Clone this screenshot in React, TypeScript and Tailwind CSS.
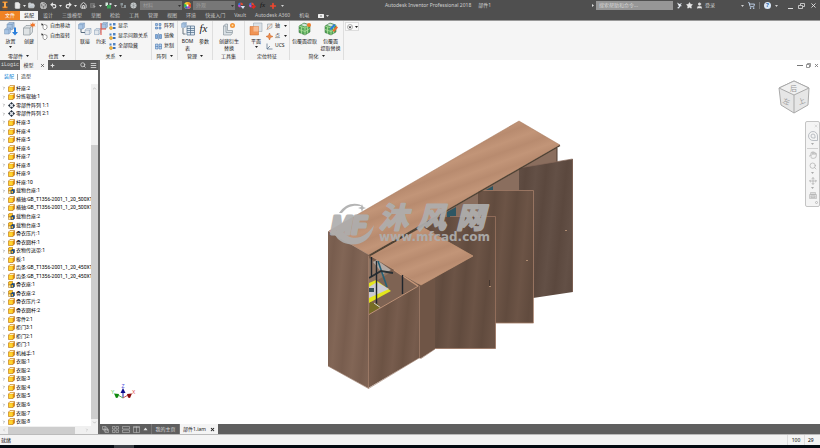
import { ReactNode } from "react";
import {
  ChevronDown,
  ChevronRight,
  ChevronUp,
  File,
  FolderOpen,
  Hand,
  House,
  Menu,
  Move,
  Plus,
  Redo2,
  Save,
  Search,
  ShoppingCart,
  Star,
  Undo2,
  User,
  X,
} from "lucide-react";

const menuTabs = [
  "设计",
  "三维模型",
  "草图",
  "检验",
  "工具",
  "管理",
  "视图",
  "环境",
  "快速入门",
  "Vault",
  "Autodesk A360",
  "机电",
];

type NodeKind = "part" | "assembly" | "pattern";

const treeNodes: { kind: NodeKind; name: string }[] = [
  { kind: "part", name: "杆座:2" },
  { kind: "part", name: "分拣辊轴:1" },
  { kind: "pattern", name: "零部件阵列 1:1" },
  { kind: "pattern", name: "零部件阵列 2:1" },
  { kind: "part", name: "杆座:3" },
  { kind: "part", name: "杆座:4" },
  { kind: "part", name: "杆座:5" },
  { kind: "part", name: "杆座:6" },
  { kind: "part", name: "杆座:7" },
  { kind: "part", name: "杆座:8" },
  { kind: "part", name: "杆座:9" },
  { kind: "part", name: "杆座:10" },
  { kind: "assembly", name: "载物台座:1" },
  { kind: "part", name: "横轴:GB_T1356-2001_1_20_500X15" },
  { kind: "part", name: "横轴:GB_T1356-2001_1_20_500X15" },
  { kind: "assembly", name: "载物台座:2" },
  { kind: "assembly", name: "载物台座:3" },
  { kind: "part", name: "叠衣压片:1" },
  { kind: "part", name: "叠衣圆杆:1" },
  { kind: "assembly", name: "衣物传送带:1" },
  { kind: "part", name: "板:1" },
  { kind: "part", name: "齿条:GB_T1356-2001_1_20_450X15" },
  { kind: "part", name: "齿条:GB_T1356-2001_1_20_450X15" },
  { kind: "assembly", name: "叠衣座:1" },
  { kind: "assembly", name: "叠衣座:2" },
  { kind: "part", name: "叠衣压片:2" },
  { kind: "part", name: "叠衣圆杆:2" },
  { kind: "part", name: "零件2:1" },
  { kind: "part", name: "柜门3:1" },
  { kind: "part", name: "柜门2:1" },
  { kind: "part", name: "柜门:1" },
  { kind: "part", name: "机械手:1" },
  { kind: "part", name: "衣服:1" },
  { kind: "part", name: "衣服:2" },
  { kind: "part", name: "衣服:3" },
  { kind: "part", name: "衣服:4" },
  { kind: "part", name: "衣服:5" },
  { kind: "part", name: "衣服:6" },
  { kind: "part", name: "衣服:7" },
  { kind: "part", name: "衣服:8" },
];

function Caret({ className = "" }: { className?: string }) {
  return (
    <svg viewBox="0 0 6 4" className={`h-[2px] w-[3px] shrink-0 ${className}`}>
      <path d="M0 0h6L3 4z" fill="currentColor" />
    </svg>
  );
}

function NodeIcon({ kind }: { kind: NodeKind }) {
  if (kind === "pattern") {
    return (
      <svg viewBox="0 0 14 14" className="size-[7px] shrink-0">
        <circle cx="7" cy="7" r="4.5" fill="#e8edf3" stroke="#53606e" strokeWidth="1.6" />
        <path
          d="M7 0l2.5 2.5L7 5 4.500 2.500zM7 9l2.500 2.500L7 14l-2.500-2.500zM2.500 4.500L5 7 2.500 9.500 0 7zM11.500 4.500L14 7l-2.500 2.500L9 7z"
          fill="#27313d"
        />
      </svg>
    );
  }
  if (kind === "assembly") {
    return (
      <svg viewBox="0 0 14 14" className="size-[7px] shrink-0">
        <path d="M1 2l3-1.500h5V8H1z" fill="#ffc928" stroke="#9c5b05" />
        <path d="M1 8h5v5H1z" fill="#fff1a8" stroke="#a86405" />
        <path d="M6 7l2-2h5v6l-2 2H6z" fill="#1c4f86" stroke="#172c46" />
        <path d="M7 8h3v4H7z" fill="#f7b32b" />
      </svg>
    );
  }
  return (
    <svg viewBox="0 0 14 14" className="size-[7px] shrink-0">
      <path d="M1 4l3-3h9v9l-3 3H1z" fill="#e08a0b" stroke="#a35a08" />
      <path d="M1.500 4.500h8v8h-8z" fill="#ffd42e" />
      <path d="M2 4l2.500-2.500h8L10 4z" fill="#fff0c0" />
    </svg>
  );
}

function ColorWheel() {
  return (
    <svg viewBox="0 0 14 14" className="size-[7px] shrink-0">
      <circle cx="7" cy="7" r="7" fill="#f5d327" />
      <path d="M7 7V0a7 7 0 0 1 6 3.500z" fill="#f08a24" />
      <path d="M7 7l6-3.500a7 7 0 0 1 0 7z" fill="#e23b2e" />
      <path d="M7 7l6 3.500A7 7 0 0 1 7 14z" fill="#b13bc4" />
      <path d="M7 7v7a7 7 0 0 1-6-3.500z" fill="#2f63e0" />
      <path d="M7 7l-6 3.500a7 7 0 0 1 0-7z" fill="#29b455" />
      <circle cx="7" cy="7" r="2" fill="#fff" />
    </svg>
  );
}

function Adjuster({ erase = false }: { erase?: boolean }) {
  return (
    <svg viewBox="0 0 14 14" className="size-[7px] shrink-0">
      <path d="M0 6a5 5 0 0 1 5-5v5z" fill="#3174d8" />
      <path d="M5 1a5 5 0 0 1 5 5H5z" fill="#e8482e" />
      <path d="M0 6h5v5a5 5 0 0 1-5-5z" fill="#c04ad0" />
      {erase ? (
        <path d="M5 10l5-5 4 4-5 5z" fill="#e02a1e" />
      ) : (
        <path d="M5 8h9l-4 6z" fill="#d5e4f5" />
      )}
    </svg>
  );
}

function TitleButton({ label, children }: { label: string; children: ReactNode }) {
  return (
    <button aria-label={label} className="flex h-full shrink-0 items-center text-[#e8e8e8]">
      {children}
    </button>
  );
}

function StyleSelect({ label, value }: { label: string; value: string }) {
  return (
    <div className="relative flex h-[9px] w-[42px] shrink-0 items-center bg-[#777]">
      <select
        aria-label={label}
        className="h-full w-full appearance-none bg-transparent pl-[3px] text-[5px] leading-[9px] text-[#9c9c9c]">
        <option>{value}</option>
      </select>
      <Caret className="pointer-events-none absolute right-[1px] text-[#333]" />
    </div>
  );
}

function TitleBar() {
  return (
    <header className="flex h-[11px] shrink-0 items-center bg-[#4f4f4f] pr-[3px] pl-[2px] text-[5px] leading-[11px] text-[#d0d0d0]">
      <svg viewBox="0 0 12 18" className="mr-[6px] h-[9px] w-[6px] shrink-0">
        <path d="M1 1h10v3H8v7h3v3H1v-3h3V4H1z" fill="#f08b23" />
        <path d="M1 15h10v2H1z" fill="#a85b16" />
        <path d="M5 2h2v11H5z" fill="#ffc279" />
      </svg>
      <div className="flex h-full items-center gap-[2px]">
        <TitleButton label="新建">
          <File className="size-[7px]" fill="#e8e8e8" />
          <Caret className="ml-[2px]" />
        </TitleButton>
        <TitleButton label="打开">
          <FolderOpen className="size-[7px]" fill="#bcc5cc" />
        </TitleButton>
      </div>
      <div className="ml-[5px] flex h-full items-center gap-[3px]">
        <TitleButton label="保存">
          <Save className="size-[7px]" strokeWidth={3} />
        </TitleButton>
        <TitleButton label="撤销">
          <Undo2 className="size-[7px]" strokeWidth={4} />
          <Caret className="ml-[2px]" />
        </TitleButton>
        <TitleButton label="重做">
          <Redo2 className="size-[7px]" strokeWidth={4} />
          <Caret className="ml-[2px]" />
        </TitleButton>
        <TitleButton label="主页">
          <House className="size-[7px]" strokeWidth={3} />
        </TitleButton>
        <TitleButton label="选择">
          <svg viewBox="0 0 14 14" className="size-[7px]">
            <path d="M1 3h8v8H1z" fill="#696969" stroke="#8d8d8d" />
            <path d="M6 5l6 5H9l-1 3z" fill="#a8a8a8" />
          </svg>
          <Caret className="ml-[2px]" />
        </TitleButton>
        <TitleButton label="本地更新">
          <svg viewBox="0 0 14 14" className="size-[7px]">
            <path d="M1 1h5v7H1z" fill="#d7e6dd" />
            <path d="M4 6h8v7H4z" fill="#3da258" />
            <path d="M9 2h4v4H9z" fill="#cfd6da" />
          </svg>
          <Caret className="ml-[2px]" />
        </TitleButton>
        <TitleButton label="返回">
          <svg viewBox="0 0 14 14" className="size-[7px]">
            <path d="M1 2h5v5H1zM8 6h4v6H8z" fill="#8a9498" />
            <path d="M3 7v4h5" stroke="#b0b0b0" fill="none" />
          </svg>
        </TitleButton>
        <TitleButton label="材料浏览器">
          <svg viewBox="0 0 14 14" className="size-[7px]">
            <circle cx="7" cy="7" r="6" fill="#c8cccd" />
            <path d="M2 4l10 6M12 4L2 10M7 1v12" stroke="#858b8d" />
          </svg>
        </TitleButton>
      </div>
      <div className="ml-[3px] flex h-full items-center gap-[2px]">
        <StyleSelect label="材料" value="材料" />
        <ColorWheel />
        <StyleSelect label="外观" value="外观" />
      </div>
      <div className="ml-[3px] flex h-full items-center gap-[4px]">
        <TitleButton label="调整">
          <Adjuster />
        </TitleButton>
        <TitleButton label="清除">
          <Adjuster erase />
        </TitleButton>
        <button className="font-['Liberation_Serif',serif] text-[7px] leading-[11px] text-[#111] italic">fx</button>
        <TitleButton label="添加">
          <Plus className="size-[8px] text-[#f0472f]" strokeWidth={5} />
        </TitleButton>
        <Caret />
      </div>
      <h1 className="flex flex-1 justify-center gap-[7px] whitespace-nowrap">
        <span>Autodesk Inventor Professional 2018</span>
        <span>部件1</span>
      </h1>
      <svg viewBox="0 0 4 6" className="mr-[2px] h-[3px] w-[2px] shrink-0">
        <path d="M0 0l4 3-4 3z" fill="#ddd" />
      </svg>
      <input
        aria-label="搜索"
        placeholder="搜索帮助和命令..."
        className="h-[9px] w-[77px] shrink-0 bg-[#969696] px-[3px] text-[5px] leading-[9px] placeholder:text-[#d5d5d5]"
      />
      <div className="ml-[3px] flex h-full items-center gap-[3px]">
        <TitleButton label="搜索">
          <svg viewBox="0 0 14 14" className="size-[7px]">
            <path d="M2 1l5 3 5-2-3 4 3 2-4 1-2 4-4-1 4-3z" fill="#e8edf4" />
          </svg>
        </TitleButton>
        <TitleButton label="收藏">
          <Star className="size-[7px]" fill="#e8e8e8" />
        </TitleButton>
        <button className="flex items-center gap-[2px]">
          <User className="size-[7px]" fill="#e8e8e8" strokeWidth={3} />
          <span>登录</span>
        </button>
      </div>
      <Caret className="ml-[26px]" />
      <div className="ml-[4px] flex h-full items-center gap-[4px]">
        <TitleButton label="商店">
          <ShoppingCart className="size-[7px] text-[#c9dcf5]" strokeWidth={3} />
        </TitleButton>
        <div className="h-[7px] w-px bg-[#777]" />
        <button
          aria-label="帮助"
          className="size-[7px] rounded-full bg-[#dbe8f7] text-[6px] leading-[7px] font-bold text-[#2463a8]">
          ?
        </button>
        <Caret />
      </div>
      <div className="ml-[10px] flex h-full items-center gap-[5px]">
        <button aria-label="最小化" className="mt-[5px] h-px w-[5px] bg-[#ddd]" />
        <TitleButton label="还原">
          <svg viewBox="0 0 14 12" className="h-[6px] w-[7px]" fill="none" stroke="currentColor" strokeWidth="1.500">
            <path d="M5 4V1h8v6h-3M1 5h8v6H1z" />
          </svg>
        </TitleButton>
        <TitleButton label="关闭">
          <X className="size-[7px]" strokeWidth={3} />
        </TitleButton>
      </div>
    </header>
  );
}

function MenuTabs() {
  return (
    <nav className="flex h-[9px] shrink-0 items-center bg-[#4f4f4f] text-[5px] leading-[9px] text-[#c8c8c8]">
      <button className="h-full w-[20px] bg-[#f08223] text-white">文件</button>
      <button className="h-full w-[18px] bg-[#f5f5f5] text-[#333]">装配</button>
      <div className="flex items-center gap-[9px] pl-[5px] whitespace-nowrap">
        {menuTabs.map((tab) => (
          <button key={tab}>{tab}</button>
        ))}
        <button aria-label="功能区显示" className="flex items-center gap-[2px]">
          <svg viewBox="0 0 12 8" className="h-[4px] w-[6px]">
            <rect width="12" height="8" rx="1" fill="#eee" />
            <circle cx="6" cy="4" r="1.500" fill="#555" />
          </svg>
          <Caret />
        </button>
      </div>
    </nav>
  );
}

function Group({
  label,
  width,
  arrow = false,
  children,
}: {
  label: string;
  width: string;
  arrow?: boolean;
  children: ReactNode;
}) {
  return (
    <section className={`flex shrink-0 flex-col border-r border-[#dedede] ${width}`}>
      <div className="flex min-h-0 flex-1 items-start pl-[1px]">{children}</div>
      <h2 className="flex h-[8px] shrink-0 items-center justify-center gap-[3px] leading-[8px]">
        {label}
        {arrow && <Caret />}
      </h2>
    </section>
  );
}

function BigButton({
  lines,
  width,
  arrow = false,
  icon,
}: {
  lines: string[];
  width: string;
  arrow?: boolean;
  icon: ReactNode;
}) {
  return (
    <button className={`flex shrink-0 flex-col items-center pt-[1px] leading-[7px] ${width}`}>
      <svg viewBox="0 0 28 28" className="mb-[2px] size-[14px]">
        {icon}
      </svg>
      {lines.map((line) => (
        <span key={line} className="whitespace-nowrap">
          {line}
        </span>
      ))}
      {arrow && <Caret className="mt-[1px]" />}
    </button>
  );
}

function SmallButton({ label, arrow = false, icon }: { label: string; arrow?: boolean; icon: ReactNode }) {
  return (
    <button className="flex h-[10px] items-center gap-[2px] whitespace-nowrap">
      <svg viewBox="0 0 14 14" className="size-[7px] shrink-0">
        {icon}
      </svg>
      {label}
      {arrow && <Caret className="ml-[2px]" />}
    </button>
  );
}

function Cube({ x, y, s, fill = "#a9c5e4" }: { x: number; y: number; s: number; fill?: string }) {
  return (
    <g transform={`translate(${x} ${y}) scale(${s})`} stroke="#6282a6" strokeWidth="0.7" strokeLinejoin="round">
      <path d="M0 3l3-3h8v8l-3 3H0z" fill={fill} />
      <path d="M0 3h8v8M8 3l3-3" fill="none" />
    </g>
  );
}

const handIcon = (
  <>
    <path d="M4 5l3-2 5 2v5l-3 3H6L4 10z" fill="#fff" stroke="#444" />
    <path d="M0 1l5 1-3 4z" fill="#333" />
  </>
);

const showIcon = (
  <>
    <path d="M1 1h4v4H1zM8 0h5v5H8z" fill="#4e83c4" />
    <circle cx="4" cy="10" r="3" fill="#f6bf42" stroke="#b67b19" />
    <path d="M8 8h5v4H8z" fill="#3c72b8" />
  </>
);

const patternIcon = (
  <path d="M1 1h4v4H1zM8 1h4v4H8zM1 8h4v4H1zM8 8h4v4H8z" fill="#9ec0e8" stroke="#3567a2" />
);

function Shrinkwrap() {
  return (
    <>
      <path d="M2 8L12 2l12 4v14l-10 6L2 21z" fill="#57a95a" stroke="#2d6134" />
      <path d="M2 8l12 4 10-6M14 12v14M7 10v14M19 9v14M2 15l12 4 10-6" stroke="#b3e29f" fill="none" strokeWidth="1.500" />
      <path d="M6 6l6-3 8 3-6 3z" fill="#d5e6dc" />
    </>
  );
}

function Ribbon() {
  return (
    <div className="flex h-[40px] shrink-0 border-t border-[#999] bg-[#f5f5f5] text-[5px] text-[#222]">
      <Group label="零部件" width="w-[38px]" arrow>
        <BigButton
          lines={["放置"]}
          width="w-[19px]"
          arrow
          icon={
            <>
              <Cube x={6} y={1} s={1.3} />
              <Cube x={1} y={12} s={1.1} />
              <path d="M20 11v9h-4l6 7 6-7h-4v-9z" fill="#2c7fdb" />
            </>
          }
        />
        <BigButton
          lines={["创建"]}
          width="w-[18px]"
          icon={
            <>
              <path d="M3 12l5-5h13v13l-5 6H3z" fill="#dfe3e5" stroke="#68747c" />
              <path d="M3 12h13v13M16 12l5-5" stroke="#68747c" fill="none" />
              <path d="M22 0l1 4 4-1-2 3 2 3-4-1-1 4-2-4-4 1 2-3-2-3 4 1z" fill="#f0762a" />
            </>
          }
        />
      </Group>
      <Group label="位置" width="w-[38px]" arrow>
        <div className="pl-[2px]">
          <SmallButton label="自由移动" icon={handIcon} />
          <SmallButton label="自由旋转" icon={handIcon} />
        </div>
      </Group>
      <Group label="关系" width="w-[76px]" arrow>
        <BigButton
          lines={["联接"]}
          width="w-[16px]"
          icon={
            <>
              <Cube x={1} y={2} s={1.1} />
              <Cube x={14} y={13} s={1.1} fill="#e3e8ec" />
              <path d="M6 14v7h8" stroke="#5a6e80" strokeWidth="2" fill="none" />
            </>
          }
        />
        <BigButton
          lines={["约束"]}
          width="w-[16px]"
          icon={
            <>
              <Cube x={15} y={1} s={1.1} />
              <Cube x={1} y={13} s={1.1} fill="#e3e8ec" />
              <path d="M14 2v24M14 14h10" stroke="#e24b3d" strokeWidth="2" fill="none" />
            </>
          }
        />
        <div>
          <SmallButton label="显示" icon={showIcon} />
          <SmallButton label="显示问题关系" icon={showIcon} />
          <SmallButton label="全部隐藏" icon={showIcon} />
        </div>
      </Group>
      <Group label="阵列" width="w-[26px]" arrow>
        <div className="pl-[2px]">
          <SmallButton label="阵列" icon={patternIcon} />
          <SmallButton
            label="镜像"
            icon={<path d="M1 3h4v8H1zM9 3h4v8H9zM7 0v14" fill="#83aee0" stroke="#3567a2" />}
          />
          <SmallButton
            label="复制"
            icon={<path d="M1 2h5v10H1zM8 2h5v10H8zM1 7h5M8 7h5" fill="#b7d1ee" stroke="#3567a2" />}
          />
        </div>
      </Group>
      <Group label="管理" width="w-[35px]" arrow>
        <BigButton
          lines={["BOM", "表"]}
          width="w-[17px]"
          icon={
            <>
              <Cube x={1} y={1} s={0.9} />
              <path d="M4 12v12h5" stroke="#6a7780" strokeWidth="2" fill="none" />
              <path d="M12 8h15v18H12z" fill="#dfe9f2" stroke="#54718e" strokeWidth="1.500" />
              <path d="M12 13h15M12 17h15M12 21h15M19 8v18" stroke="#54718e" strokeWidth="1.500" />
            </>
          }
        />
        <BigButton
          lines={["参数"]}
          width="w-[16px]"
          icon={
            <text x="5" y="20" fontFamily="Liberation Serif" fontStyle="italic" fontSize="22" fill="#222">
              fx
            </text>
          }
        />
      </Group>
      <Group label="工具集" width="w-[32px]">
        <BigButton
          lines={["创建衍生", "替换"]}
          width="w-[30px]"
          icon={
            <>
              <path d="M3 8l4-4h4v13h10v5l-3 4H3z" fill="#dbe2e6" stroke="#697780" />
              <path d="M3 8h5v13h12" stroke="#697780" fill="none" />
              <circle cx="21" cy="7" r="5" fill="#f39235" />
              <circle cx="21" cy="7" r="2" fill="#ffe1a3" />
            </>
          }
        />
      </Group>
      <Group label="定位特征" width="w-[45px]">
        <BigButton
          lines={["平面"]}
          width="w-[20px]"
          arrow
          icon={
            <>
              <path d="M9 2h17v17H9z" fill="#dce2e7" stroke="#8d9aa5" />
              <path d="M2 9h17v17H2z" fill="#f19454" stroke="#cb6427" />
              <path d="M9 9h10v10H9z" fill="#f7bb92" />
            </>
          }
        />
        <div>
          <SmallButton
            label="轴"
            arrow
            icon={
              <>
                <path d="M3 2h9v7l-9 4z" fill="#e5e8ea" stroke="#7f8c95" />
                <path d="M1 13L12 1" stroke="#e37028" />
              </>
            }
          />
          <SmallButton
            label="点"
            arrow
            icon={<path d="M7 0l2 5 5 2-5 2-2 5-2-5-5-2 5-2z" fill="#ed8b4b" stroke="#c76427" />}
          />
          <SmallButton
            label="UCS"
            icon={<path d="M2 1v11h11M2 12l6-6" stroke="#58728c" strokeWidth="1.500" fill="none" />}
          />
        </div>
      </Group>
      <Group label="简化" width="w-[54px]" arrow>
        <BigButton
          lines={["包覆面提取"]}
          width="w-[27px]"
          icon={
            <>
              <Shrinkwrap />
              <circle cx="22" cy="6" r="4" fill="#f07b2c" />
            </>
          }
        />
        <BigButton
          lines={["包覆面", "提取替换"]}
          width="w-[25px]"
          icon={
            <>
              <Shrinkwrap />
              <path d="M11 14L20 4l3 3-9 9z" fill="#2d7ae0" />
              <path d="M17 17l8-9 3 3-8 9z" fill="#ef6a30" />
            </>
          }
        />
      </Group>
      <button
        aria-label="更多"
        className="mt-[1px] ml-[1px] flex h-[9px] w-[14px] items-center justify-center gap-[2px] border border-[#ddd] bg-[#fafafa]">
        <svg viewBox="0 0 12 12" className="size-[6px]">
          <circle cx="6" cy="6" r="5" fill="#fff" stroke="#666" />
          <path d="M3 5h6L6 9z" fill="#222" />
        </svg>
        <Caret />
      </button>
    </div>
  );
}

function ModelBrowser() {
  return (
    <aside className="flex w-[100px] shrink-0 flex-col border-r-2 border-[#666] bg-white text-[5px] text-black">
      <div className="flex h-[10px] shrink-0 items-center bg-[#5b5b5b] leading-[10px] text-[#ddd]">
        <button className="w-[20px] font-['Liberation_Mono','Noto_Sans_CJK_SC',monospace]">iLogic</button>
        <button className="flex h-full w-[28px] items-center justify-center gap-[6px] bg-[#f4f4f4] text-[#333]">
          模型
          <X className="size-[5px]" strokeWidth={3} />
        </button>
        <button aria-label="添加面板" className="ml-[2px]">
          <Plus className="size-[5px]" strokeWidth={5} />
        </button>
        <button aria-label="查找" className="ml-auto">
          <Search className="size-[6px]" strokeWidth={3} />
        </button>
        <button aria-label="菜单" className="mr-[1px] ml-[4px]">
          <Menu className="size-[7px]" strokeWidth={3} />
        </button>
      </div>
      <div className="flex h-[14px] shrink-0 items-center pl-[4px]">
        <button className="w-[10px] text-[#1688d6]">装配</button>
        <div className="mx-[3px] h-[6px] w-px bg-[#999]" />
        <button className="text-[#333]">造型</button>
      </div>
      <div className="flex min-h-0 flex-1">
        <ul className="flex min-w-0 flex-1 flex-col">
          {treeNodes.map((node, i) => (
            <li key={i} className="flex min-h-0 flex-1 items-center pl-[2px]">
              <ChevronRight className="mr-[2px] size-[4px] shrink-0 text-[#555]" strokeWidth={3} />
              <NodeIcon kind={node.kind} />
              <span className="ml-[1px] font-['Liberation_Sans_Narrow','Roboto','Noto_Sans_CJK_SC',sans-serif] leading-[7px] whitespace-nowrap">
                {node.name}
              </span>
            </li>
          ))}
        </ul>
        <div className="z-10 flex w-[7px] shrink-0 flex-col items-center bg-[#f0f0f0] text-[#888]">
          <ChevronUp className="my-[2px] size-[5px]" />
          <div className="flex-1" />
          <div className="h-4/5 w-full bg-[#cdcdcd]" />
          <ChevronDown className="my-[1px] size-[5px]" />
        </div>
      </div>
      <div className="flex h-[8px] shrink-0 items-center bg-[#f0f0f0] pl-[2px] text-[#888]">
        <ChevronRight className="size-[4px] rotate-180" />
        <div className="ml-[2px] h-[7px] w-[67px] bg-[#cdcdcd]" />
        <ChevronRight className="ml-[10px] size-[4px]" />
      </div>
    </aside>
  );
}

function CabinetModel() {
  return (
    <svg viewBox="325 118 250 273" className="absolute top-[58px] left-[225px] h-[273px] w-[250px]">
      <defs>
        <linearGradient id="top" gradientUnits="userSpaceOnUse" x1="400" y1="200" x2="403" y2="208" spreadMethod="reflect">
          <stop offset="0" stopColor="#c29578" />
          <stop offset="1" stopColor="#b88b6f" />
        </linearGradient>
        <linearGradient id="side" gradientUnits="userSpaceOnUse" x1="328" y1="0" x2="338" y2="1" spreadMethod="reflect">
          <stop offset="0" stopColor="#826656" />
          <stop offset="1" stopColor="#785d4e" />
        </linearGradient>
        <linearGradient id="front" gradientUnits="userSpaceOnUse" x1="368" y1="0" x2="378" y2="1" spreadMethod="reflect">
          <stop offset="0" stopColor="#775c4d" />
          <stop offset="1" stopColor="#6c5344" />
        </linearGradient>
        <linearGradient id="door" gradientUnits="userSpaceOnUse" x1="435" y1="0" x2="446" y2="1" spreadMethod="reflect">
          <stop offset="0" stopColor="#6c5446" />
          <stop offset="1" stopColor="#614b3e" />
        </linearGradient>
        <linearGradient id="back" gradientUnits="userSpaceOnUse" x1="533" y1="0" x2="543" y2="1" spreadMethod="reflect">
          <stop offset="0" stopColor="#635046" />
          <stop offset="1" stopColor="#5b483e" />
        </linearGradient>
      </defs>
      {/* carcass under the top board */}
      <path d="M369 256L557 147v19l-36 24-41 30-50 70-12 67z" fill="#8a6e5e" />
      <path d="M484 191l9-5v6h-9zM447 212l9-5v9l-9 2z" fill="#2e5663" />
      <path d="M557 148v16" stroke="#4c3a30" />
      {/* doors, back to front */}
      <path d="M519 168l54-9v133l-40 6-14-20z" fill="url(#back)" />
      <path d="M519 168l53.500-9v133" stroke="#86695a" strokeWidth="0.7" fill="none" />
      <path d="M478 190h55v133h-55z" fill="url(#door)" />
      <path d="M478 190.500h55.500V323H496" stroke="#a47d68" strokeWidth="0.8" fill="none" />
      <path d="M426 217h69.500v131.500H435l-14 9v-75z" fill="url(#door)" />
      <path d="M450 216.500h45.500v132H435" stroke="#9b7460" strokeWidth="0.8" fill="none" />
      <path d="M418 284l17-10v75l-14 9h-3z" fill="#6f5546" />
      <path d="M489.500 280v6" stroke="#46372f" />
      <path d="M489 286.500h2M526 260.500h2M565 230.500h2" stroke="#ad8a70" />
      {/* boards */}
      <path d="M519 121l41 24-191 110-40-24z" fill="url(#top)" stroke="#a57557" strokeWidth="0.5" />
      <path d="M560 145.500L369 255.500" stroke="#4d4032" strokeWidth="1.400" />
      <path d="M328 231l41 24v133.500L328 366z" fill="url(#side)" />
      {/* open compartment */}
      <path d="M369 255l50 30v4l-50 27z" fill="#785c4c" />
      <path d="M369 258l24 15-24 12z" fill="#8f7564" />
      <path d="M373 262l4-2 14 10-8 4z" fill="#b3aaa4" />
      <path d="M369 285l26-15 24 16-50 29z" fill="#7e6353" />
      <path d="M394 270l24 16" stroke="#c89879" strokeWidth="1.500" />
      <path d="M369 283l7-3 15 11-22 12z" fill="#e3e61c" />
      <path d="M369 287l8-5 12 7-20 9z" fill="#cbcbd3" />
      <path d="M369 288h5v4h-5z" fill="#38505b" />
      <path d="M378 261l9 26" stroke="#246178" strokeWidth="1.600" />
      <path d="M369 278l12-7 12 2" stroke="#2a3034" strokeWidth="1.800" fill="none" />
      <path d="M371.500 257v20M376.500 261v46M402.500 275v19" stroke="#20262d" strokeWidth="1.400" />
      <path d="M370 302l8 2 3 4-12 6z" fill="#766c25" />
      <path d="M374 303l7 5" stroke="#d5d5cf" />
      <path d="M369 314l50-28.500V358l-50 29.500z" fill="url(#front)" />
      <path d="M369 314.500l49.500-28.500" stroke="#bd9277" />
      <path d="M368.500 256v132M419.500 286v72" stroke="#a17d69" strokeWidth="0.8" />
      <path d="M328 366l40.500 22.500L419 358l2 .5 14-9.500" stroke="#947260" fill="none" strokeWidth="0.6" />
      <path d="M370 255.500l53-28 50 28.500-52 29z" fill="url(#top)" stroke="#c89979" strokeWidth="0.7" />
      <path d="M370 255.500l53-30" stroke="#4d4032" strokeWidth="1.400" />
      {/* watermark */}
      <g fill="#aeaeae" opacity="0.92">
        <path d="M339 213c6-10 18-12 25-6-9-3-17-1-22 6z" />
        <path d="M334 231c2 17 36 21 40-6-8 13-22 18-32 6z" />
        <path d="M362 204l1 3 3 1-3 1-1 3-1-3-3-1 3-1z" />
        <g stroke="#aeaeae" strokeLinejoin="round">
          <text x="331" y="234" strokeWidth="3" fontFamily="Liberation Sans" fontWeight="bold" fontStyle="italic" fontSize="25">
            MF
          </text>
          <text y="228" strokeWidth="1.800" fontFamily="Noto Sans CJK SC" fontWeight="bold" fontStyle="italic" fontSize="29">
            <tspan x="379">沐</tspan>
            <tspan x="417">风</tspan>
            <tspan x="456">网</tspan>
          </text>
        </g>
        <text x="379" y="241" fontFamily="DejaVu Sans" fontWeight="bold" fontSize="12">
          www.mfcad.com
        </text>
      </g>
    </svg>
  );
}

function AxisTriad() {
  return (
    <svg viewBox="0 0 26 18" className="absolute bottom-[22px] left-[10px] h-[18px] w-[26px]">
      <path d="M13 14V6" stroke="#14149c" />
      <path d="M13 14l-5-3" stroke="#5cab5c" />
      <path d="M13 14l5-3" stroke="#c65a5a" />
      <path d="M13 4l2.500 5h-5z" fill="#0d0d8c" />
      <path d="M4 9.500l5 .5-1 3.500-2 .5z" fill="#0d8a0d" />
      <path d="M22 9.500l-5 .5 1 3.500 2 .5z" fill="#8c0d0d" />
      <g fontFamily="Liberation Sans" fontSize="5">
        <text x="11.500" y="4" fill="#5252dd">Z</text>
        <text x="1" y="10" fill="#40c840">Y</text>
        <text x="22" y="10" fill="#e34848">X</text>
      </g>
    </svg>
  );
}

function ViewCube() {
  return (
    <svg viewBox="0 0 32 34" className="absolute top-[20px] right-[10px] h-[34px] w-[32px]">
      <path d="M1 8L16 1l15 7-1 17-14 8L3 25z" fill="#e6e6e6" stroke="#aaa" />
      <path d="M1 8l15 7 15-7-15-7z" fill="#f0f0f0" stroke="#aaa" />
      <path d="M16 15v18" stroke="#aaa" />
      <g fontFamily="Noto Sans CJK SC" fontSize="7" fill="#999">
        <text x="12" y="11">后</text>
        <text x="5" y="24" transform="rotate(20 8 21)">左</text>
        <text x="20" y="24" transform="rotate(-20 23 21)">上</text>
      </g>
    </svg>
  );
}

function NavBar() {
  return (
    <div className="absolute top-[61px] right-0 flex h-[86px] w-[15px] flex-col items-center justify-between rounded-[2px] border border-[#c4c4c4] bg-[#f4f4f4] py-[2px] text-[#aaa]">
      <X className="mr-[1px] size-[4px] self-end" />
      <button aria-label="控制盘">
        <svg viewBox="0 0 20 20" className="size-[10px]" fill="none" stroke="#a8aeb4" strokeWidth="1.500">
          <path d="M10 1a9 9 0 1 0 0 18h9v-9a9 9 0 0 0-9-9z" />
          <path d="M10 6a4 4 0 1 0 0 8h4v-4a4 4 0 0 0-4-4z" />
        </svg>
      </button>
      <Caret />
      <div className="h-px w-[11px] bg-[#d0d0d0]" />
      <button aria-label="平移">
        <Hand className="size-[8px]" />
      </button>
      <button aria-label="缩放">
        <Search className="size-[8px]" />
      </button>
      <Caret />
      <button aria-label="动态观察">
        <Move className="size-[8px]" />
      </button>
      <Caret />
      <button aria-label="观察方向">
        <svg viewBox="0 0 16 14" className="h-[7px] w-[8px]" fill="#ddd" stroke="#aaa">
          <path d="M3 1h10v4H3zM1 5h14v8H1zM4 8h8v3H4z" />
        </svg>
      </button>
      <div className="mr-[1px] size-[3px] self-end rounded-full border border-[#bbb]" />
    </div>
  );
}

function DocumentTabs() {
  return (
    <nav className="flex h-[10px] shrink-0 items-center bg-[#5f5f5f] text-[5px] leading-[10px] text-[#ddd]">
      <div className="flex items-center gap-[3px] pl-[2px]">
        <button aria-label="层叠">
          <svg viewBox="0 0 14 14" className="size-[7px]" fill="#5f5f5f" stroke="#ccc">
            <path d="M1 1h7v6H1zM4 4h7v6H4zM6 7h7v6H6z" />
          </svg>
        </button>
        <button aria-label="平铺">
          <svg viewBox="0 0 14 14" className="size-[7px]" fill="none" stroke="#ccc">
            <path d="M1 1h5v5H1zM8 1h5v5H8zM1 8h5v5H1zM8 8h5v5H8z" />
          </svg>
        </button>
        <button aria-label="水平排列">
          <svg viewBox="0 0 16 14" className="h-[7px] w-[8px]" fill="none" stroke="#ccc">
            <path d="M1 1h14v5H1zM1 8h14v5H1z" />
          </svg>
        </button>
        <button aria-label="垂直排列">
          <svg viewBox="0 0 14 14" className="size-[7px]" fill="none" stroke="#ccc">
            <path d="M1 1h12v12H1zM7 1v12M1 3h12" />
          </svg>
        </button>
        <button aria-label="更多文档" className="ml-[1px]">
          <Caret className="rotate-180 scale-150" />
        </button>
      </div>
      <button className="ml-[4px] h-full w-[29px] border-x border-[#777]">我的主页</button>
      <button className="flex h-full w-[38px] items-center justify-center gap-[4px] bg-[#f4f4f4] text-[#222]">
        部件1.iam
        <X className="size-[5px]" strokeWidth={5} />
      </button>
    </nav>
  );
}

export default function App() {
  return (
    <div className="flex h-screen w-full flex-col overflow-hidden bg-white font-['Noto_Sans','Noto_Sans_CJK_SC',sans-serif]">
      <TitleBar />
      <MenuTabs />
      <Ribbon />
      <div className="flex min-h-0 flex-1">
        <ModelBrowser />
        <div className="flex min-w-0 flex-1 flex-col">
          <main className="relative min-h-0 flex-1 overflow-hidden bg-white">
            <div className="flex justify-end gap-[3px] pt-[3px] pr-[1px] text-[#777]">
              <button aria-label="最小化文档" className="mt-[2px] h-px w-[6px] bg-[#777]" />
              <button aria-label="还原文档">
                <svg viewBox="0 0 10 10" className="size-[5px]" fill="none" stroke="currentColor" strokeWidth="1.500">
                  <path d="M3 3V1h6v6H7M1 3h6v6H1z" />
                </svg>
              </button>
              <button aria-label="关闭文档">
                <X className="size-[5px]" strokeWidth={4} />
              </button>
            </div>
            <CabinetModel />
            <AxisTriad />
            <ViewCube />
            <NavBar />
          </main>
          <DocumentTabs />
        </div>
      </div>
      <footer className="flex h-[11px] shrink-0 items-center border-t border-[#bbb] bg-[#f4f4f4] text-[5px] leading-[10px] text-black">
        <span className="flex-1 pl-px">就绪</span>
        <span className="w-[17px] border-l border-[#ddd] text-center">100</span>
        <span className="w-[16px] border-l border-[#ddd] pl-[3px]">29</span>
      </footer>
      <div className="flex h-[3px] shrink-0 bg-[#050b12]">
        <div className="ml-[114px] w-[20px] bg-[#3b4046]" />
      </div>
    </div>
  );
}
